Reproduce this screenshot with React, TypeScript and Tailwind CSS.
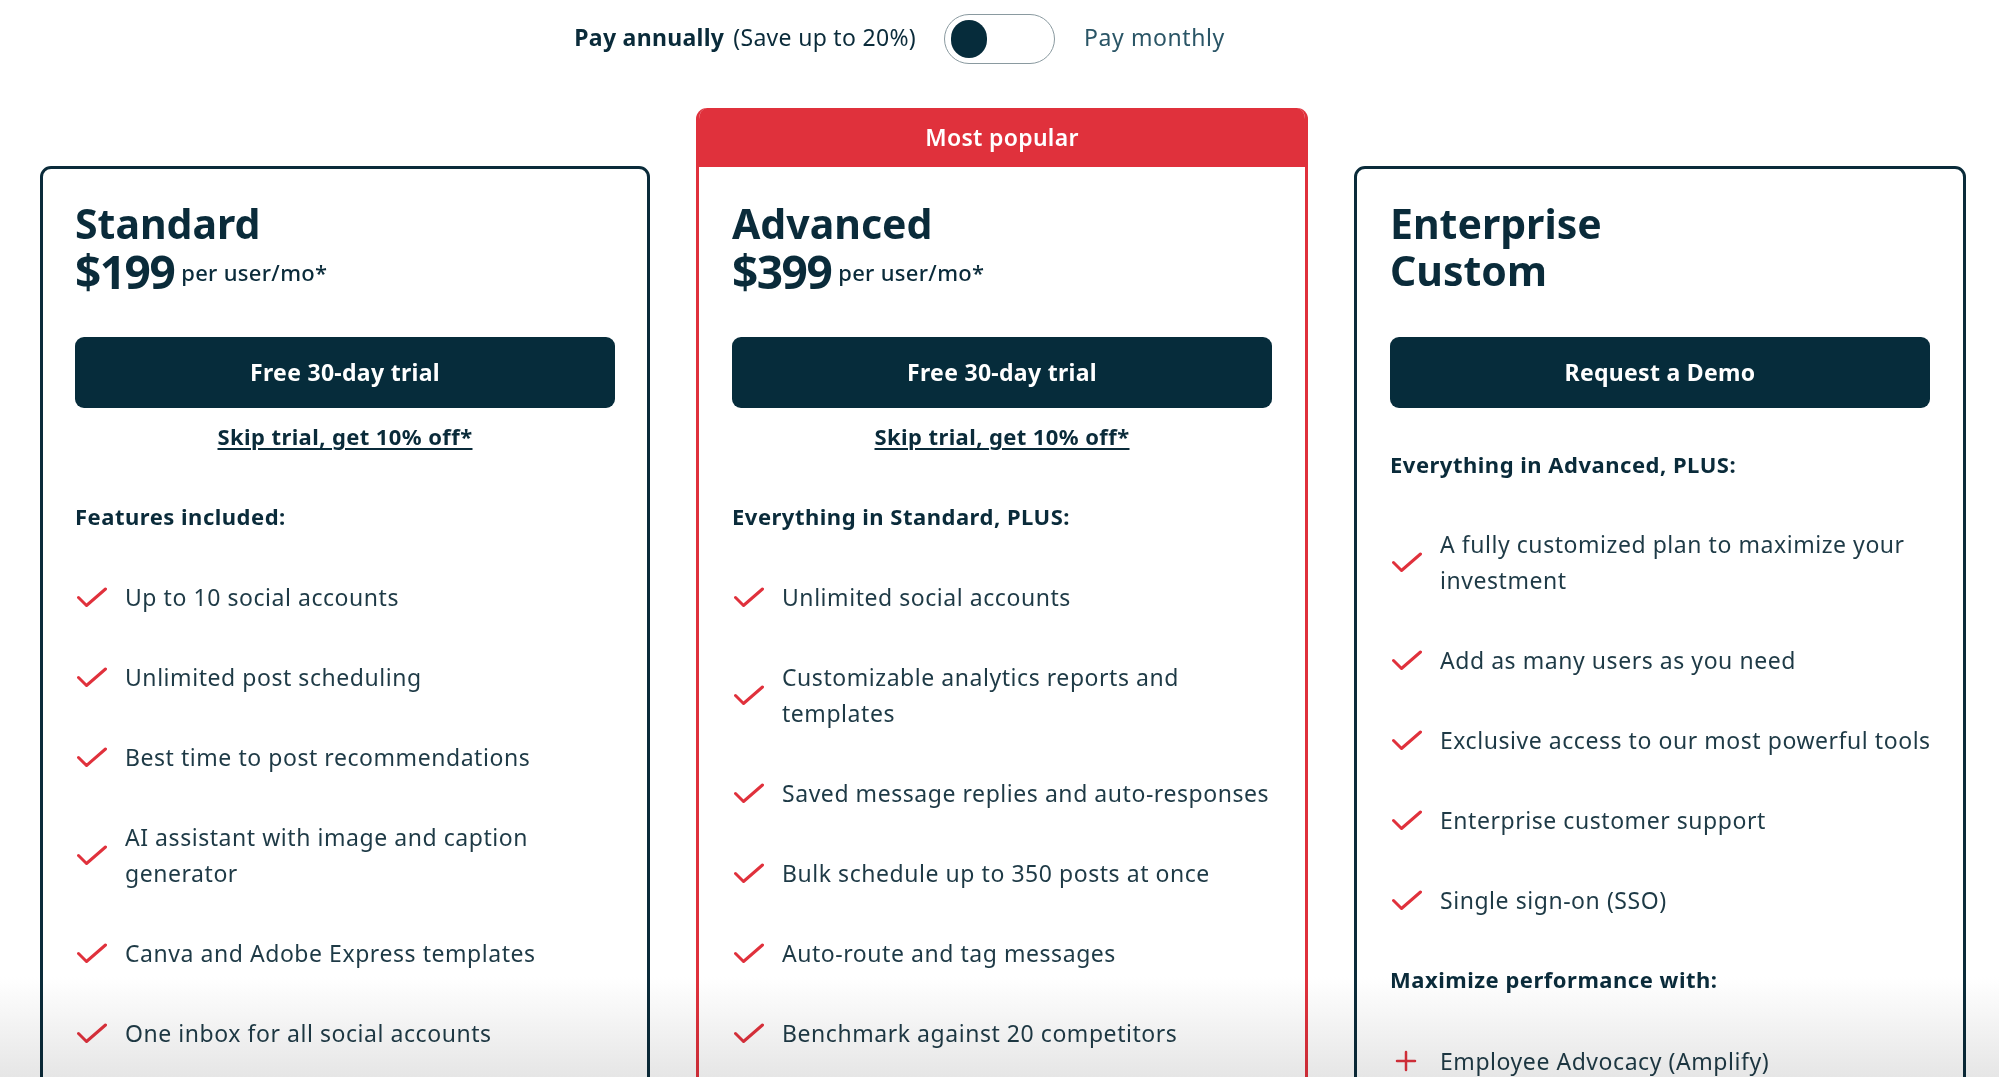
import React from "react";

const standardFeatures = [
  "Up to 10 social accounts",
  "Unlimited post scheduling",
  "Best time to post recommendations",
  "AI assistant with image and caption\ngenerator",
  "Canva and Adobe Express templates",
  "One inbox for all social accounts",
];

const advancedFeatures = [
  "Unlimited social accounts",
  "Customizable analytics reports and\ntemplates",
  "Saved message replies and auto-responses",
  "Bulk schedule up to 350 posts at once",
  "Auto-route and tag messages",
  "Benchmark against 20 competitors",
];

const enterpriseFeatures = [
  "A fully customized plan to maximize your\ninvestment",
  "Add as many users as you need",
  "Exclusive access to our most powerful tools",
  "Enterprise customer support",
  "Single sign-on (SSO)",
];

function Check() {
  return (
    <svg width="30" height="21" viewBox="0 0 30 21" fill="none" className="shrink-0 ml-[2px]">
      <path
        d="M1.5 10.5 L9.5 18.5 L28.5 2"
        stroke="#e0313c"
        strokeWidth="3"
        strokeLinecap="round"
        strokeLinejoin="round"
      />
    </svg>
  );
}

function Plus() {
  return (
    <svg width="30" height="22" viewBox="0 0 30 22" fill="none" className="shrink-0 ml-[2px]">
      <path d="M14 2 V20 M5 11 H23" stroke="#e0313c" strokeWidth="2.5" strokeLinecap="round" />
    </svg>
  );
}

function FeatureList({ items, icon = "check" }: { items: string[]; icon?: "check" | "plus" }) {
  return (
    <ul className="flex flex-col gap-[44px]">
      {items.map((item) => (
        <li key={item} className="flex items-center gap-[18px]">
          {icon === "check" ? <Check /> : <Plus />}
          <span className="whitespace-pre text-[23px] leading-[36px] tracking-[0.55px] text-[#1e3a46]">
            {item}
          </span>
        </li>
      ))}
    </ul>
  );
}

function PriceHeader({ name, price }: { name: string; price: string }) {
  return (
    <div className="text-[#0a2b3a]">
      <h2 className="text-[41px] h-[47px] leading-[47px] font-bold">{name}</h2>
      <div className="flex items-center gap-[7px] h-[48px]">
        <span className="text-[46px] leading-[48px] font-bold tracking-[-1.5px]">{price}</span>
        <span className="text-[22px] leading-[28px] font-medium tracking-[0.3px] pt-[2px]">per user/mo*</span>
      </div>
    </div>
  );
}

function TrialButton({ label }: { label: string }) {
  return (
    <button className="w-full h-[71px] rounded-[9px] bg-[#062c3b] text-white text-[23px] font-bold tracking-[0.3px]">
      {label}
    </button>
  );
}

function SkipLink() {
  return (
    <div className="mt-[14px] text-center h-[28px] leading-[28px]">
      <a
        href="#"
        className="text-[22px] font-bold tracking-[0.4px] text-[#0a2b3a] underline underline-offset-[3px] decoration-[2px]"
      >
        Skip trial, get 10% off*
      </a>
    </div>
  );
}

function SectionTitle({ children, className = "" }: { children: React.ReactNode; className?: string }) {
  return (
    <p className={`text-[22px] leading-[28px] font-bold tracking-[0.5px] text-[#0a2b3a] ${className}`}>
      {children}
    </p>
  );
}

export default function App() {
  return (
    <div
      className="relative h-[1077px] overflow-hidden bg-white"
      style={{ fontFamily: '"Noto Sans", "Open Sans", Arial, sans-serif' }}
    >
      {/* Billing toggle */}
      <div className="grid grid-cols-[1fr_auto_1fr] items-center pt-[12px] h-[64px]">
        <div className="flex justify-end items-center gap-[9px] pr-[28px] text-[23px] tracking-[0.3px] text-[#0a2b3a] -mt-[2px]">
          <span className="font-bold">Pay annually</span>
          <span>(Save up to 20%)</span>
        </div>
        <div className="w-[111px] h-[50px] rounded-full border-[1.5px] border-[#8a9aa0] flex items-center px-[6px] mt-[2px]">
          <div className="w-[36px] h-[38px] rounded-full bg-[#062c3b]" />
        </div>
        <div className="pl-[29px] text-[23px] tracking-[0.6px] text-[#2a5566] -mt-[2px]">Pay monthly</div>
      </div>

      {/* Plans */}
      <div className="flex items-start gap-[46px] pl-[40px] mt-[44px]">
        {/* Standard */}
        <div className="w-[610px] mt-[58px] h-[1000px] rounded-[11px] border-[3px] border-[#0a2b3a] px-[32px] pt-[31px]">
          <PriceHeader name="Standard" price="$199" />
          <div className="mt-[42px]">
            <TrialButton label="Free 30-day trial" />
          </div>
          <SkipLink />
          <SectionTitle className="mt-[52px]">Features included:</SectionTitle>
          <div className="mt-[49px]">
            <FeatureList items={standardFeatures} />
          </div>
        </div>

        {/* Advanced */}
        <div className="w-[612px] h-[1060px] rounded-t-[11px] overflow-hidden border-[3px] border-t-0 border-[#e0313c]">
          <div className="h-[59px] bg-[#e0313c] flex items-center justify-center text-white text-[23px] font-semibold tracking-[0.3px]">
            Most popular
          </div>
          <div className="px-[33px] pt-[33px]">
            <PriceHeader name="Advanced" price="$399" />
            <div className="mt-[42px]">
              <TrialButton label="Free 30-day trial" />
            </div>
            <SkipLink />
            <SectionTitle className="mt-[52px]">Everything in Standard, PLUS:</SectionTitle>
            <div className="mt-[49px]">
              <FeatureList items={advancedFeatures} />
            </div>
          </div>
        </div>

        {/* Enterprise */}
        <div className="w-[612px] mt-[58px] h-[1000px] rounded-[11px] border-[3px] border-[#0a2b3a] px-[33px] pt-[31px]">
          <h2 className="text-[41px] leading-[47px] font-bold text-[#0a2b3a]">
            Enterprise
            <br />
            Custom
          </h2>
          <div className="mt-[43px]">
            <TrialButton label="Request a Demo" />
          </div>
          <SectionTitle className="mt-[42px]">Everything in Advanced, PLUS:</SectionTitle>
          <div className="mt-[48px]">
            <FeatureList items={enterpriseFeatures} />
          </div>
          <SectionTitle className="mt-[47px]">Maximize performance with:</SectionTitle>
          <div className="mt-[50px]">
            <FeatureList items={["Employee Advocacy (Amplify)"]} icon="plus" />
          </div>
        </div>
      </div>

      {/* Bottom fade */}
      <div className="pointer-events-none absolute bottom-0 left-0 right-0 h-[100px] mix-blend-multiply bg-linear-to-b from-white to-[#e6e6e6]" />
    </div>
  );
}
